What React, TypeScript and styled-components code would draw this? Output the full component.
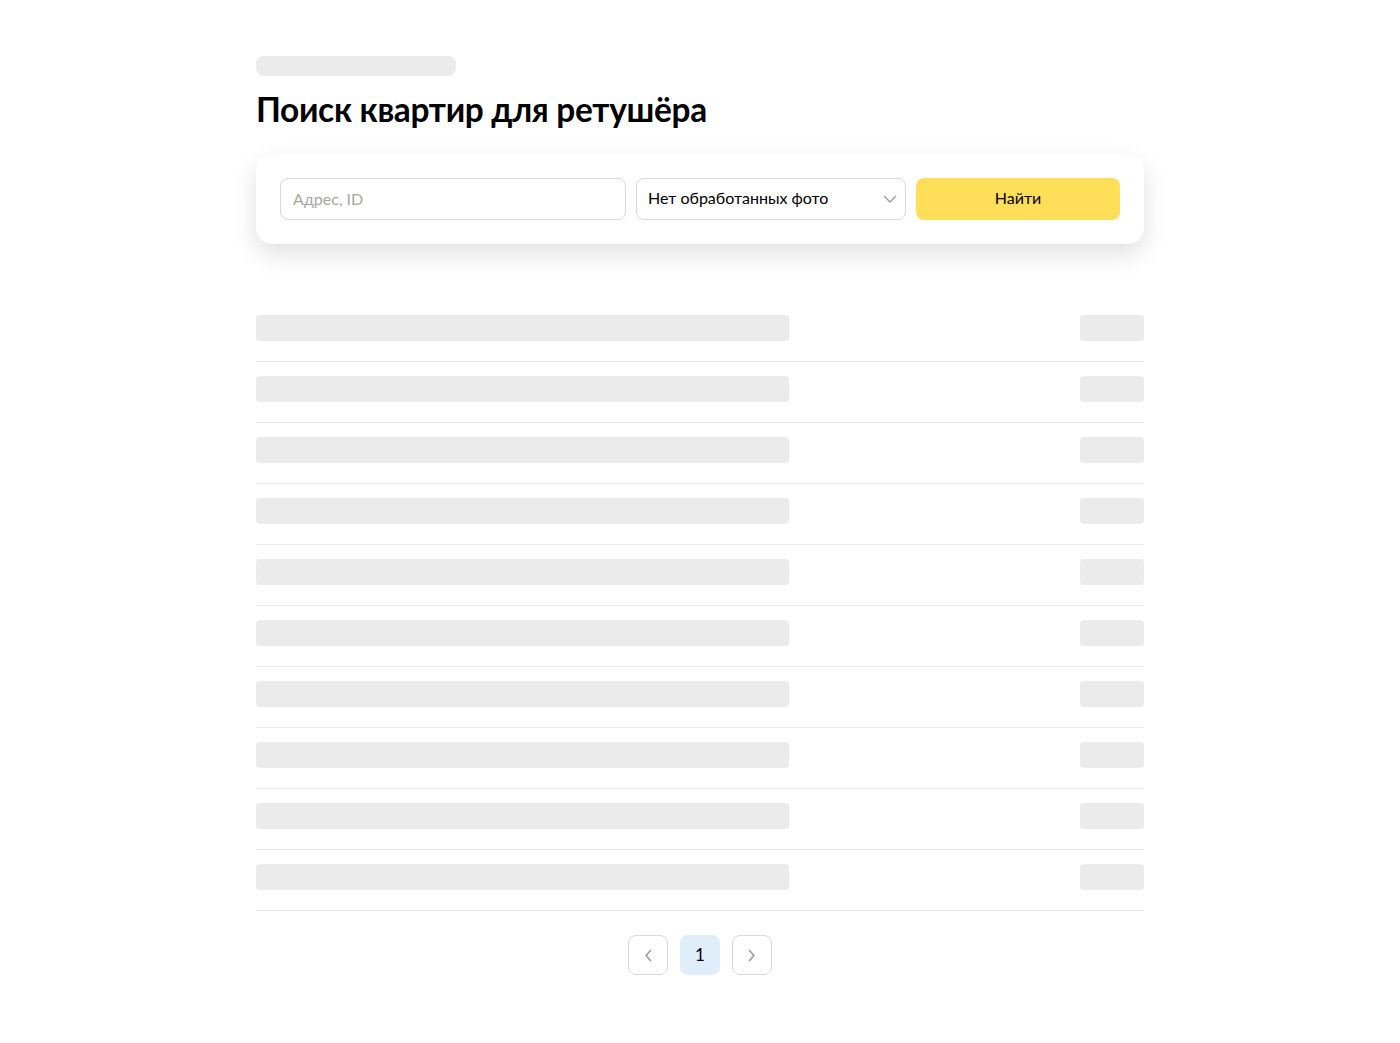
import React from "react";
import styled, { createGlobalStyle } from "styled-components";

const Global = createGlobalStyle`
  html, body { margin: 0; padding: 0; background: #fff; }
  body { font-family: Lato, "Open Sans", sans-serif; color: #000; }
  * { box-sizing: border-box; }
`;

const Page = styled.div`
  width: 888px;
  margin: 0 auto;
  padding-top: 56px;
  padding-bottom: 68px;
`;

const Skeleton = styled.div<{ $w: string; $h: number; $r?: number }>`
  width: ${(p) => p.$w};
  height: ${(p) => p.$h}px;
  border-radius: ${(p) => p.$r ?? 4}px;
  background: #ebebeb;
  flex-shrink: 0;
`;

const Title = styled.h1`
  margin: 13px 0 0;
  font-family: Lato, sans-serif;
  font-weight: 700;
  font-size: 33.4px;
  line-height: 40px;
  letter-spacing: -0.3px;
`;

const Card = styled.div`
  margin-top: 25px;
  background: #fff;
  border-radius: 16px;
  box-shadow: 0 10px 24px rgba(0, 0, 0, 0.12);
  padding: 24px;
  display: flex;
  gap: 10px;
`;

const Input = styled.input`
  width: 346px;
  height: 42px;
  border: 1px solid #d9d9d9;
  border-radius: 8px;
  padding: 0 12px 2px;
  font-family: Lato, sans-serif;
  font-size: 16px;
  outline: none;
  &::placeholder { color: #a6a6a6; }
`;

const Select = styled.div`
  width: 270px;
  height: 42px;
  border: 1px solid #d9d9d9;
  border-radius: 8px;
  padding: 0 7px 0 11px;
  display: flex;
  align-items: center;
  justify-content: space-between;
  font-size: 16px;
  color: #000;
  & > span { padding-bottom: 3px; }
`;

const Button = styled.button`
  width: 204px;
  height: 42px;
  border: none;
  border-radius: 8px;
  background: #ffde59;
  font-family: Lato, sans-serif;
  font-size: 16px;
  color: #000;
  padding: 0 0 3px;
`;

const List = styled.div`
  margin-top: 57px;
`;

const Row = styled.div`
  display: flex;
  justify-content: space-between;
  padding: 14px 0 20px;
  border-bottom: 1px solid #ebebeb;
`;

const Pager = styled.div`
  margin-top: 24px;
  display: flex;
  justify-content: center;
  gap: 12px;
`;

const PageBtn = styled.div<{ $active?: boolean }>`
  width: 40px;
  height: 40px;
  border-radius: 8px;
  border: 1px solid ${(p) => (p.$active ? "transparent" : "#d9d9d9")};
  background: ${(p) => (p.$active ? "#e0eefc" : "#fff")};
  display: flex;
  align-items: center;
  justify-content: center;
  font-size: 17px;
  color: #000;
  padding-bottom: 2px;
`;

const Chevron = ({ d, w = 1.5 }: { d: string; w?: number }) => (
  <svg width={16} height={16} viewBox="0 0 16 16" fill="none">
    <path d={d} stroke="#a0a0a0" strokeWidth={w} strokeLinecap="round" strokeLinejoin="round" />
  </svg>
);

export default function App() {
  return (
    <>
      <Global />
      <Page>
        <Skeleton $w="200px" $h={20} $r={8} />
        <Title>Поиск квартир для ретушёра</Title>
        <Card>
          <Input placeholder="Адрес, ID" />
          <Select>
            <span>Нет обработанных фото</span>
            <Chevron d="M2.5 5.5l5.5 5.5 5.5-5.5" />
          </Select>
          <Button>Найти</Button>
        </Card>
        <List>
          {Array.from({ length: 10 }).map((_, i) => (
            <Row key={i}>
              <Skeleton $w="533px" $h={26} />
              <Skeleton $w="64px" $h={26} />
            </Row>
          ))}
        </List>
        <Pager>
          <PageBtn>
            <Chevron w={1.8} d="M10.5 4.5L6 9.5l4.5 5" />
          </PageBtn>
          <PageBtn $active>1</PageBtn>
          <PageBtn>
            <Chevron w={1.8} d="M5.5 4.5L10 9.5l-4.5 5" />
          </PageBtn>
        </Pager>
      </Page>
    </>
  );
}
